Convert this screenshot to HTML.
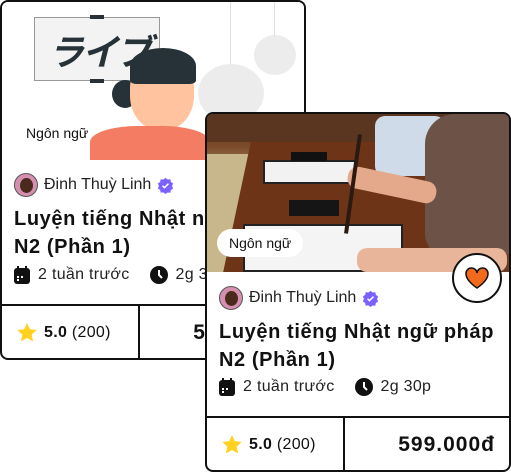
<!DOCTYPE html>
<html><head><meta charset="utf-8"><style>
*{margin:0;padding:0;box-sizing:border-box}
body{width:511px;height:472px;background:#fff;position:relative;overflow:hidden;font-family:"Liberation Sans","DejaVu Sans",sans-serif;color:#111}
.card{position:absolute;width:306px;height:360px;border:2px solid #111;border-radius:8px;background:#fff;overflow:hidden}
.img{position:absolute;left:0;top:0;width:302px;height:158px;overflow:hidden}
.tag{position:absolute;left:10px;top:115px;background:#fff;border-radius:16px;padding:6px 12px;font-size:14px}
.author{position:absolute;left:12px;top:171px;display:flex;align-items:center;font-size:16px;color:#222}
.av{width:24px;height:24px;border-radius:50%;background:#d58fb0;border:1px solid #555;margin-right:6px;position:relative;overflow:hidden}
.av:after{content:"";position:absolute;left:5px;top:4px;width:13px;height:15px;border-radius:50%;background:#4a2a1c}
.ver{width:17px;height:17px;margin-left:6px}
.title{position:absolute;left:12px;top:203px;font-size:20px;font-weight:bold;line-height:28px;width:280px;letter-spacing:0.6px;white-space:nowrap}
.meta{position:absolute;left:12px;top:264px;display:flex;align-items:center;font-size:16px;color:#222;letter-spacing:0.3px}
.meta svg{margin-right:8px}
.bot{position:absolute;left:0;top:302px;width:302px;height:56px;border-top:2px solid #111}
.vd{position:absolute;left:136px;top:0;width:2px;height:56px;background:#111}
.rate{position:absolute;left:15px;top:17px;display:flex;align-items:center;font-size:16px;letter-spacing:0.3px}
.price{position:absolute;right:14px;top:15px;font-size:21px;font-weight:bold;letter-spacing:1px}
</style></head><body>

<div class="card" style="left:0;top:0">
 <div class="img" style="background:#fff">
  <div style="position:absolute;left:32px;top:15px;width:126px;height:64px;background:#f3f3f3;border:1px solid #999"></div>
  <div style="position:absolute;left:88px;top:13px;width:14px;height:4px;background:#263238"></div>
  <div style="position:absolute;left:88px;top:77px;width:14px;height:4px;background:#263238"></div>
  <div style="position:absolute;left:46px;top:22px;font-family:'Noto Sans CJK JP',sans-serif;font-size:36px;font-weight:bold;color:#263238;font-style:italic;letter-spacing:-2px">ライブ</div>
  <div style="position:absolute;left:196px;top:62px;width:66px;height:58px;border-radius:50%;background:#ececec"></div>
  <div style="position:absolute;left:252px;top:33px;width:42px;height:40px;border-radius:50%;background:#ececec"></div>
  <div style="position:absolute;left:228px;top:0;width:1px;height:62px;background:#e0e0e0"></div>
  <div style="position:absolute;left:272px;top:0;width:1px;height:34px;background:#e0e0e0"></div>
  <div style="position:absolute;left:110px;top:78px;width:26px;height:28px;border-radius:50%;background:#263238"></div>
  <div style="position:absolute;left:128px;top:52px;width:64px;height:76px;border-radius:45%;background:#ffc3a0"></div>
  <div style="position:absolute;left:128px;top:46px;width:66px;height:36px;border-radius:50% 50% 10% 10%;background:#263238"></div>
  <div style="position:absolute;left:88px;top:124px;width:120px;height:40px;border-radius:40% 40% 0 0;background:#f47c63"></div>
  <div class="tag" style="background:transparent;left:24px;top:123px;padding:0">Ngôn ngữ</div>
 </div>
 <div class="author"><div class="av"></div>Đinh Thuỳ Linh<svg class="ver" viewBox="0 0 20 20"><path d="M10 1l2.5 2 3.2-.3.6 3.1 2.7 1.8-1.3 3 1.3 3-2.7 1.7-.6 3.2-3.2-.3L10 20l-2.5-1.9-3.2.3-.6-3.2L1 13.5l1.3-3L1 7.6l2.7-1.8.6-3.1 3.2.3z" fill="#7b61ff"/><path d="M6.5 10.3l2.3 2.3 4.7-4.8" stroke="#fff" stroke-width="1.8" fill="none"/></svg></div>
 <div class="title">Luyện tiếng Nhật ngữ pháp<br>N2 (Phần 1)</div>
 <div class="meta"><svg width="16" height="18" viewBox="0 0 16 18"><rect x="0" y="2" width="16" height="16" rx="3" fill="#111"/><rect x="3" y="0" width="2" height="4" fill="#111"/><rect x="11" y="0" width="2" height="4" fill="#111"/><rect x="3" y="10" width="2" height="2" fill="#fff"/><rect x="7" y="10" width="2" height="2" fill="#fff"/><rect x="3" y="13" width="2" height="2" fill="#fff"/></svg>2 tuần trước<svg width="18" height="18" viewBox="0 0 18 18" style="margin-left:20px"><circle cx="9" cy="9" r="9" fill="#111"/><path d="M9 4v5l3 3" stroke="#fff" stroke-width="2" fill="none"/></svg>2g 30p</div>
 <div class="bot"><div class="vd"></div><div class="rate"><svg width="20" height="19" viewBox="0 0 24 23" style="margin-right:7px"><path d="M12 0l3.5 7.6 8.3.9-6.2 5.6 1.8 8.2L12 18.1 4.6 22.3l1.8-8.2L.2 8.5l8.3-.9z" fill="#ffd21f"/></svg><b>5.0</b>&nbsp;(200)</div><div class="price">599.000đ</div></div>
</div>

<div class="card" style="left:205px;top:112px">
 <div class="img" style="background:linear-gradient(180deg,#6a3d22 0%,#7a4a2a 20%,#b9a37a 45%,#8a5a36 60%,#6b3a20 100%)">
  <div style="position:absolute;left:0;top:0;width:302px;height:28px;background:#5a3520"></div>
  <div style="position:absolute;left:0;top:40px;width:60px;height:118px;background:#c9b78c"></div>
  <div style="position:absolute;left:30px;top:28px;width:200px;height:130px;background:#6e3418;transform:skewX(-12deg)"></div>
  <div style="position:absolute;left:56px;top:46px;width:94px;height:24px;background:#f2f2f2;border:2px solid #222"></div>
  <div style="position:absolute;left:84px;top:38px;width:36px;height:9px;background:#111"></div>
  <div style="position:absolute;left:82px;top:86px;width:50px;height:16px;background:#151515"></div>
  <div style="position:absolute;left:36px;top:110px;width:160px;height:48px;background:#f4f4f4;border:2px solid #222"></div>
  <div style="position:absolute;left:168px;top:2px;width:70px;height:60px;background:#cfdbe8;border-radius:10px"></div>
  <div style="position:absolute;left:218px;top:0;width:86px;height:140px;background:#6d5347;border-radius:30px 0 0 20px"></div>
  <div style="position:absolute;left:140px;top:60px;width:90px;height:22px;background:#e3a98a;border-radius:10px;transform:rotate(12deg)"></div>
  <div style="position:absolute;left:150px;top:134px;width:150px;height:24px;background:#e8b59a;border-radius:10px"></div>
  <div style="position:absolute;left:144px;top:20px;width:4px;height:100px;background:#2a1a12;transform:rotate(8deg)"></div>
  <div class="tag">Ngôn ngữ</div>
 </div>
 <div style="position:absolute;left:245px;top:139px;width:50px;height:50px;border-radius:50%;background:#fff;border:2px solid #111;display:flex;align-items:center;justify-content:center"><svg width="24" height="22" viewBox="0 0 24 22"><path d="M12 21S1 14 1 7a5.5 5.5 0 0 1 11-1 5.5 5.5 0 0 1 11 1c0 7-11 14-11 14z" fill="#f26a1b" stroke="#111" stroke-width="1.5"/></svg></div>
 <div class="author" style="top:172px"><div class="av"></div>Đinh Thuỳ Linh<svg class="ver" viewBox="0 0 20 20"><path d="M10 1l2.5 2 3.2-.3.6 3.1 2.7 1.8-1.3 3 1.3 3-2.7 1.7-.6 3.2-3.2-.3L10 20l-2.5-1.9-3.2.3-.6-3.2L1 13.5l1.3-3L1 7.6l2.7-1.8.6-3.1 3.2.3z" fill="#7b61ff"/><path d="M6.5 10.3l2.3 2.3 4.7-4.8" stroke="#fff" stroke-width="1.8" fill="none"/></svg></div>
 <div class="title" style="top:204px">Luyện tiếng Nhật ngữ pháp<br>N2 (Phần 1)</div>
 <div class="meta"><svg width="16" height="18" viewBox="0 0 16 18"><rect x="0" y="2" width="16" height="16" rx="3" fill="#111"/><rect x="3" y="0" width="2" height="4" fill="#111"/><rect x="11" y="0" width="2" height="4" fill="#111"/><rect x="3" y="10" width="2" height="2" fill="#fff"/><rect x="7" y="10" width="2" height="2" fill="#fff"/><rect x="3" y="13" width="2" height="2" fill="#fff"/></svg>2 tuần trước<svg width="18" height="18" viewBox="0 0 18 18" style="margin-left:20px"><circle cx="9" cy="9" r="9" fill="#111"/><path d="M9 4v5l3 3" stroke="#fff" stroke-width="2" fill="none"/></svg>2g 30p</div>
 <div class="bot"><div class="vd"></div><div class="rate"><svg width="20" height="19" viewBox="0 0 24 23" style="margin-right:7px"><path d="M12 0l3.5 7.6 8.3.9-6.2 5.6 1.8 8.2L12 18.1 4.6 22.3l1.8-8.2L.2 8.5l8.3-.9z" fill="#ffd21f"/></svg><b>5.0</b>&nbsp;(200)</div><div class="price">599.000đ</div></div>
</div>
</body></html>
